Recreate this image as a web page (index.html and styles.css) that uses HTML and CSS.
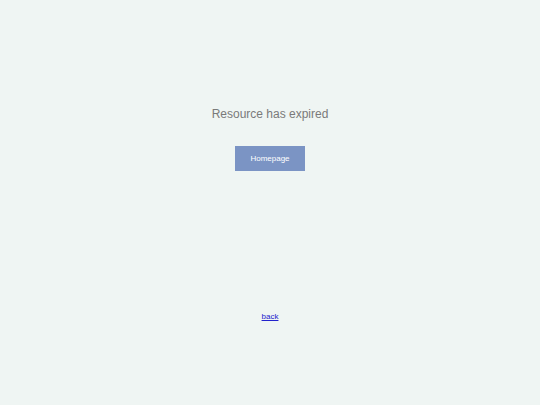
FILE: index.html
```html
<!DOCTYPE html>
<html>
<head>
<meta charset="utf-8">
<link rel="stylesheet" href="styles.css">
</head>
<body>
<main class="page">
  <section class="panel">
    <h1 class="title">Resource has expired</h1>
    <a class="btn" href="#">Homepage</a>
  </section>
  <footer class="foot">
    <a class="back" href="#">back</a>
  </footer>
</main>
</body>
</html>
```
FILE: styles.css
```css
html, body {
  margin: 0;
  padding: 0;
  background: #eff5f3;
  font-family: "Liberation Sans", Arial, sans-serif;
}
.page {
  width: 540px;
  height: 405px;
  display: flex;
  flex-direction: column;
  align-items: center;
}
.panel {
  display: flex;
  flex-direction: column;
  align-items: center;
  padding-top: 106px;
}
.title {
  margin: 0;
  font-size: 12px;
  font-weight: normal;
  color: #7a7a7a;
  line-height: 16px;
}
.btn {
  margin-top: 24px;
  width: 70px;
  height: 25px;
  background: #7b94c4;
  color: #ffffff;
  font-size: 8px;
  line-height: 25px;
  text-align: center;
  text-decoration: none;
}
.foot {
  margin-top: 134px;
}
.back {
  font-size: 8px;
  color: #2222cc;
  line-height: 10px;
}
```
